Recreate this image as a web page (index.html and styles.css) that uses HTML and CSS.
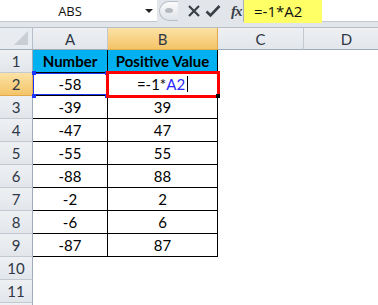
FILE: index.html
```html
<!DOCTYPE html>
<html lang="en">
<head>
  <meta charset="UTF-8" />
  <title>Positive Value</title>
  <link rel="stylesheet" href="styles.css">
</head>
<body>

<!-- Barra de fórmulas -->
<div class="formula-bar">
  <div class="name-box">
    <span class="name">ABS</span>
    <span class="drop"></span>
  </div>
  <div class="grip"><span></span></div>
  <div class="buttons">
    <svg class="btn" width="14" height="14" viewBox="0 0 14 14">
      <path d="M2 2 L12 12 M12 2 L2 12" stroke="#3a3f46" stroke-width="2.2" fill="none" />
    </svg>
    <svg class="btn" width="16" height="14" viewBox="0 0 16 14">
      <path d="M1.5 7.5 L5.5 11.5 L14.5 2" stroke="#3a3f46" stroke-width="2.6" fill="none" />
    </svg>
    <span class="fx">fx</span>
  </div>
  <div class="formula">
    <span class="formula-text">=-1*A2</span>
  </div>
</div>

<div class="band"></div>

<!-- Hoja -->
<div class="sheet">
  <div class="corner">
    <svg width="14" height="14" viewBox="0 0 14 14"><polygon points="14,0 14,14 0,14" fill="#c9ced5" /></svg>
  </div>
  <div class="col-head">A</div>
  <div class="col-head selected">B</div>
  <div class="col-head">C</div>
  <div class="col-head">D</div>

  <div class="row-head">1</div>
  <div class="cell t title">Number</div>
  <div class="cell t title">Positive Value</div>
  <div class="cell"></div>
  <div class="cell"></div>

  <div class="row-head selected">2</div>
  <div class="cell t ref">-58
    <span class="h tl"></span><span class="h tr"></span><span class="h bl"></span><span class="h br"></span>
  </div>
  <div class="cell t active">=-1*<span class="blue">A2</span><span class="caret"></span></div>
  <div class="cell"></div>
  <div class="cell"></div>

  <div class="row-head">3</div>
  <div class="cell t">-39</div>
  <div class="cell t">39</div>
  <div class="cell"></div>
  <div class="cell"></div>

  <div class="row-head">4</div>
  <div class="cell t">-47</div>
  <div class="cell t">47</div>
  <div class="cell"></div>
  <div class="cell"></div>

  <div class="row-head">5</div>
  <div class="cell t">-55</div>
  <div class="cell t">55</div>
  <div class="cell"></div>
  <div class="cell"></div>

  <div class="row-head">6</div>
  <div class="cell t">-88</div>
  <div class="cell t">88</div>
  <div class="cell"></div>
  <div class="cell"></div>

  <div class="row-head">7</div>
  <div class="cell t">-2</div>
  <div class="cell t">2</div>
  <div class="cell"></div>
  <div class="cell"></div>

  <div class="row-head">8</div>
  <div class="cell t">-6</div>
  <div class="cell t">6</div>
  <div class="cell"></div>
  <div class="cell"></div>

  <div class="row-head">9</div>
  <div class="cell t">-87</div>
  <div class="cell t">87</div>
  <div class="cell"></div>
  <div class="cell"></div>

  <div class="row-head">10</div>
  <div class="cell"></div>
  <div class="cell"></div>
  <div class="cell"></div>
  <div class="cell"></div>

  <div class="row-head">11</div>
  <div class="cell"></div>
  <div class="cell"></div>
  <div class="cell"></div>
  <div class="cell"></div>

  <div class="row-head"></div>
  <div class="cell"></div>
  <div class="cell"></div>
  <div class="cell"></div>
  <div class="cell"></div>
</div>

</body>
</html>
```

FILE: styles.css
```css
body {
  margin: 0;
  width: 378px;
  height: 305px;
  overflow: hidden;
  background: white;
  font-family: Lato, 'Open Sans', sans-serif;
}

* {
  box-sizing: border-box;
}

/* Barra de fórmulas */
.formula-bar {
  display: flex;
  height: 22px;
  background: #e2e6eb;
}

.name-box {
  width: 157px;
  background: white;
  border-bottom: 1px solid #c3c9d0;
  display: flex;
  align-items: center;
}

.name {
  flex: 1;
  text-align: center;
  font-family: 'Open Sans', sans-serif;
  font-size: 13px;
  color: #111;
  padding-right: 5px;
}

.drop {
  width: 0;
  height: 0;
  border-left: 4px solid transparent;
  border-right: 4px solid transparent;
  border-top: 4px solid #222;
  margin-right: 4px;
}

.grip {
  width: 19px;
  height: 20px;
  margin-top: 1px;
  margin-left: 2px;
  border: 1px solid #b9bfc7;
  border-right: none;
  border-radius: 10px 0 0 10px;
  background: linear-gradient(#fbfbfc, #dfe3e8);
  display: flex;
  align-items: center;
  justify-content: center;
}

.grip span {
  width: 8px;
  height: 5px;
  border-radius: 50%;
  background: #b4b9c0;
  margin-top: -2px;
}

.buttons {
  width: 65px;
  display: flex;
  align-items: center;
  gap: 4px;
  padding-left: 9px;
}

.fx {
  font-family: 'Liberation Serif', serif;
  font-style: italic;
  font-weight: bold;
  font-size: 15px;
  color: #3a3f46;
  margin-left: 6px;
  letter-spacing: -1px;
}

.formula {
  flex: 1;
  background: white;
  border-left: 1px solid #aab1ba;
  border-bottom: 1px solid #c3c9d0;
}

.formula-text {
  display: inline-block;
  width: 78px;
  height: 23px;
  background: #ffff66;
  padding-left: 10px;
  line-height: 22px;
  font-family: 'Open Sans', sans-serif;
  font-size: 15px;
  color: #111;
}

.band {
  height: 6px;
  background: #e2e6eb;
  border-bottom: 1px solid #b6bec8;
}

/* Hoja */
.sheet {
  display: grid;
  grid-template-columns: 33px 75px 110px 86px 86px;
  grid-template-rows: 22px repeat(12, 23px);
  font-size: 15px;
}

.corner {
  background: #e8ebef;
  border-right: 1px solid #b6bec8;
  border-bottom: 1px solid #9eabb9;
  display: flex;
  align-items: flex-end;
  justify-content: flex-end;
  padding: 0 4px 4px 0;
}

.col-head,
.row-head {
  display: flex;
  align-items: center;
  justify-content: center;
  background: linear-gradient(#eef0f3, #e2e6eb);
  color: #2e3746;
  font-size: 15px;
}

.col-head {
  border-right: 1px solid #c3c9d0;
  border-bottom: 1px solid #9eabb9;
}

.row-head {
  border-right: 1px solid #9eabb9;
  border-bottom: 1px solid #c3c9d0;
}

.col-head.selected,
.row-head.selected {
  background: linear-gradient(#fbe2a6, #f4c467);
  border-color: #e2a94a;
}

.cell {
  display: flex;
  align-items: center;
  justify-content: center;
  color: #000;
}

.cell.t {
  border-right: 1px solid #000;
  border-bottom: 1px solid #000;
}

.title {
  background: #00b0f0;
  font-weight: bold;
}

.ref {
  position: relative;
  box-shadow: inset 0 0 0 1px #1f33ff;
  border-bottom-color: #1f33ff;
}

.h {
  position: absolute;
  width: 4px;
  height: 4px;
  background: #1f33ff;
}

.tl { left: -1px; top: -2px; }
.tr { right: -2px; top: -2px; }
.bl { left: -1px; bottom: -3px; }
.br { right: -2px; bottom: -3px; }

.active {
  position: relative;
  z-index: 2;
  outline: 3px solid #ff0000;
  outline-offset: -1px;
}

.active::after {
  content: "";
  position: absolute;
  right: -3px;
  bottom: -3px;
  width: 4px;
  height: 4px;
  background: #000;
}

.blue {
  color: #2a2aff;
}

.caret {
  display: inline-block;
  width: 1px;
  height: 16px;
  background: #000;
  margin-left: 2px;
}
```
